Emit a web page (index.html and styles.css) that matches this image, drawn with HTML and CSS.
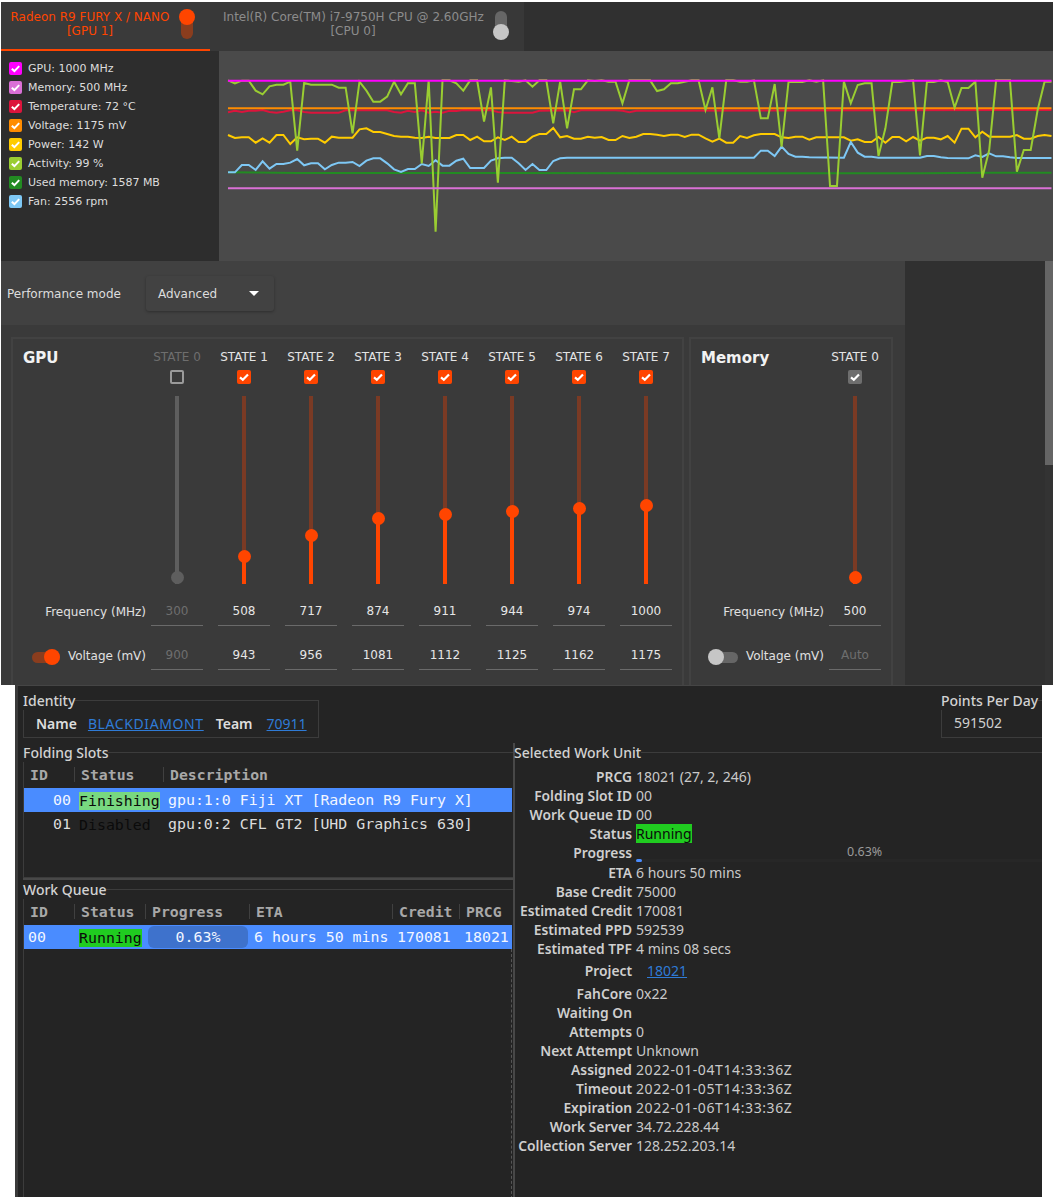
FILE: index.html
```html
<!DOCTYPE html>
<html lang="en">
<head>
<meta charset="utf-8">
<title>Radeon profile and FAHControl</title>
<link rel="stylesheet" href="styles.css">
</head>
<body>
<svg class="defs" width="0" height="0" aria-hidden="true"><symbol id="tick" viewBox="0 0 13 13"><path d="M2.8 6.8l2.6 2.3 4.8-5" fill="none" stroke="#fff" stroke-width="2"/></symbol></svg>

<section class="profile">
  <nav class="tabs">
    <div class="tab tab-active">
      <div class="tab-label">Radeon R9 FURY X / NANO<br>[GPU 1]</div>
      <span class="vtoggle vtoggle-on"><i></i></span>
    </div>
    <div class="tab tab-idle">
      <div class="tab-label">Intel(R) Core(TM) i7-9750H CPU @ 2.60GHz<br>[CPU 0]</div>
      <span class="vtoggle vtoggle-off"><i></i></span>
    </div>
  </nav>

  <div class="monitor">
    <ul class="legend">
      <li><span class="box c1"><svg><use href="#tick"/></svg></span>GPU: 1000 MHz</li>
      <li><span class="box c2"><svg><use href="#tick"/></svg></span>Memory: 500 MHz</li>
      <li><span class="box c3"><svg><use href="#tick"/></svg></span>Temperature: 72 °C</li>
      <li><span class="box c4"><svg><use href="#tick"/></svg></span>Voltage: 1175 mV</li>
      <li><span class="box c5"><svg><use href="#tick"/></svg></span>Power: 142 W</li>
      <li><span class="box c6"><svg><use href="#tick"/></svg></span>Activity: 99 %</li>
      <li><span class="box c7"><svg><use href="#tick"/></svg></span>Used memory: 1587 MB</li>
      <li><span class="box c8"><svg><use href="#tick"/></svg></span>Fan: 2556 rpm</li>
    </ul>
    <svg class="graph" viewBox="219 51 834 210">
      <g transform="translate(228 0) scale(6.92 0.33333)">
        <polyline class="line s3" points="0,337 1,332 2,336 3,332 4,332 5,330 6,336 7,338 8,335 9,331 10,331 11,336 12,338 16,338 17,331 23,331 24,336 25,338 26,332 27,336 28,331 29,338 30,335 31,338 32,332 33,333 34,330 38,331 39,336 40,338 44,338 45,332 49,331 50,337 51,331 55,331 56,331 57,332 58,337 59,332 119,330"/>
        <polyline class="line s4" points="0,325 119,325"/>
        <polyline class="line s5" points="0,405 1,414 2,412 3,412 4,428 5,415 6,428 7,405 8,405 9,432 10,412 11,418 12,416 13,416 14,428 15,410 16,413 17,413 18,413 19,388 20,385 21,396 22,396 23,402 24,408 25,410 26,410 27,413 28,414 29,410 30,414 31,414 32,414 33,405 34,405 35,420 36,410 37,424 38,424 39,412 40,420 41,410 42,426 43,426 44,410 45,402 46,402 47,384 48,412 49,408 50,416 51,416 52,410 53,413 54,411 55,420 56,420 57,408 58,414 59,410 60,402 61,402 62,404 63,408 64,404 65,404 66,411 67,404 68,404 69,415 70,425 71,416 72,428 73,428 74,408 75,414 76,406 77,402 78,402 79,402 80,412 81,414 82,410 83,410 84,419 85,412 86,412 87,412 88,412 89,412 90,422 91,418 92,426 93,426 94,411 95,428 96,411 97,411 98,424 99,411 100,422 101,413 102,413 103,418 104,408 105,428 106,386 107,386 108,412 109,395 110,410 111,410 112,410 113,410 114,405 115,416 116,416 117,408 118,405 119,408"/>
        <polyline class="line s7" points="0,517 10,519 30,519 60,520 100,520 110,518 119,518"/>
        <polyline class="line s8" points="0,517 1,517 2,495 3,495 4,510 5,484 6,506 7,492 8,492 9,488 10,477 11,496 12,490 13,490 14,508 15,495 16,488 17,488 18,486 19,498 20,482 21,475 22,475 23,490 24,508 25,516 26,507 27,507 28,492 29,498 30,481 31,497 32,497 33,482 34,476 35,504 36,504 37,504 38,482 39,475 40,473 41,473 42,490 43,510 44,492 45,510 46,510 47,483 48,475 49,473 76,473 77,452 78,452 79,468 80,440 81,462 82,470 83,470 84,472 89,473 90,426 91,458 92,470 93,470 94,473 100,473 101,468 102,468 103,472 104,474 107,475 108,466 109,471 110,460 111,469 112,469 113,472 114,474 119,474"/>
        <polyline class="line s6" points="0,241 1,250 2,242 3,242 4,272 5,283 6,259 7,254 8,254 9,245 10,452 11,249 12,254 13,254 14,254 15,254 16,263 17,263 18,400 19,245 20,272 21,305 22,305 23,290 24,245 25,283 26,250 27,250 28,490 29,240 30,695 31,241 32,241 33,250 34,272 35,241 36,241 37,365 38,262 39,548 40,241 41,243 42,245 43,241 44,260 45,241 46,241 47,370 48,245 49,385 50,268 51,268 52,241 53,243 54,241 55,245 56,245 57,310 58,241 59,241 60,241 61,241 62,273 63,268 64,250 65,250 66,245 67,241 68,241 69,330 70,262 71,415 72,241 73,241 74,245 75,245 76,241 77,355 78,355 79,252 80,440 81,246 82,246 83,246 84,241 85,245 86,241 87,558 88,558 89,245 90,310 91,255 92,250 93,250 94,468 95,385 96,246 97,246 98,243 99,241 100,466 101,246 102,246 103,241 104,246 105,323 106,264 107,264 108,245 109,533 110,450 111,241 112,241 113,241 114,515 115,450 116,450 117,330 118,245 119,245"/>
        <polyline class="line s2" points="0,565 119,565"/>
        <polyline class="line s1" points="0,242 119,242"/>
      </g>
    </svg>
  </div>

  <div class="lower-scroll">
    <div class="controls">
      <div class="perf">
        <span>Performance mode</span>
        <div class="select"><span>Advanced</span><i class="caret"></i></div>
      </div>
      <div class="frames">
        <div class="frame">
          <div class="grid">
            <h2 class="frame-title">GPU</h2>
            <div class="state-name off">STATE 0</div>
            <div class="state-name">STATE 1</div>
            <div class="state-name">STATE 2</div>
            <div class="state-name">STATE 3</div>
            <div class="state-name">STATE 4</div>
            <div class="state-name">STATE 5</div>
            <div class="state-name">STATE 6</div>
            <div class="state-name">STATE 7</div>

            <div></div>
            <div class="check-cell"><span class="cb cb-empty"></span></div>
            <div class="check-cell"><span class="cb cb-on"><svg><use href="#tick"/></svg></span></div>
            <div class="check-cell"><span class="cb cb-on"><svg><use href="#tick"/></svg></span></div>
            <div class="check-cell"><span class="cb cb-on"><svg><use href="#tick"/></svg></span></div>
            <div class="check-cell"><span class="cb cb-on"><svg><use href="#tick"/></svg></span></div>
            <div class="check-cell"><span class="cb cb-on"><svg><use href="#tick"/></svg></span></div>
            <div class="check-cell"><span class="cb cb-on"><svg><use href="#tick"/></svg></span></div>
            <div class="check-cell"><span class="cb cb-on"><svg><use href="#tick"/></svg></span></div>

            <div></div>
            <div class="slider slider-off" style="--v:7px"><b></b><i></i></div>
            <div class="slider" style="--v:28px"><b></b><i></i></div>
            <div class="slider" style="--v:49px"><b></b><i></i></div>
            <div class="slider" style="--v:66px"><b></b><i></i></div>
            <div class="slider" style="--v:70px"><b></b><i></i></div>
            <div class="slider" style="--v:73px"><b></b><i></i></div>
            <div class="slider" style="--v:76px"><b></b><i></i></div>
            <div class="slider" style="--v:79px"><b></b><i></i></div>

            <div class="row-label">Frequency (MHz)</div>
            <div class="value off">300</div>
            <div class="value">508</div>
            <div class="value">717</div>
            <div class="value">874</div>
            <div class="value">911</div>
            <div class="value">944</div>
            <div class="value">974</div>
            <div class="value">1000</div>

            <div class="row-label"><span class="htoggle htoggle-on"><i></i></span>Voltage (mV)</div>
            <div class="value off">900</div>
            <div class="value">943</div>
            <div class="value">956</div>
            <div class="value">1081</div>
            <div class="value">1112</div>
            <div class="value">1125</div>
            <div class="value">1162</div>
            <div class="value">1175</div>
          </div>
        </div>
        <div class="frame">
          <div class="grid grid-mem">
            <h2 class="frame-title">Memory</h2>
            <div class="state-name">STATE 0</div>
            <div></div>
            <div class="check-cell"><span class="cb cb-gray"><svg><use href="#tick"/></svg></span></div>
            <div></div>
            <div class="slider" style="--v:7px"><b></b><i></i></div>
            <div class="row-label">Frequency (MHz)</div>
            <div class="value">500</div>
            <div class="row-label"><span class="htoggle htoggle-off"><i></i></span>Voltage (mV)</div>
            <div class="value off">Auto</div>
          </div>
        </div>
      </div>
    </div>
    <div class="side"></div>
    <div class="scrollbar"><div class="thumb"></div></div>
  </div>
</section>

<section class="fah">
  <div class="top-row">
    <fieldset class="group identity">
      <legend>Identity</legend>
      <div class="identity-row">
        <strong>Name</strong><a class="spaced" href="#">BLACKDIAMONT</a><strong class="team">Team</strong><a href="#">70911</a>
      </div>
    </fieldset>
    <fieldset class="group ppd">
      <legend>Points Per Day</legend>
      <div class="ppd-value">591502</div>
    </fieldset>
  </div>

  <div class="panes">
    <div class="pane-left">
      <fieldset class="group slots">
        <legend>Folding Slots</legend>
        <div class="tr tr-head cols-slots"><span>ID</span><span>Status</span><span>Description</span></div>
        <div class="tr tr-sel cols-slots"><span class="id-r">00</span><span class="cell"><em class="chip chip-finish">Finishing</em></span><span class="cell">gpu:1:0 Fiji XT [Radeon R9 Fury X]</span></div>
        <div class="tr cols-slots"><span class="id-r">01</span><span class="cell"><em class="chip">Disabled</em></span><span class="cell">gpu:0:2 CFL GT2 [UHD Graphics 630]</span></div>
      </fieldset>
      <div class="hsplit"></div>
      <fieldset class="group queue">
        <legend>Work Queue</legend>
        <div class="tr tr-head cols-queue"><span>ID</span><span>Status</span><span>Progress</span><span>ETA</span><span>Credit</span><span>PRCG</span></div>
        <div class="tr tr-sel cols-queue"><span class="id-l">00</span><span class="cell"><em class="chip chip-run">Running</em></span><span class="bar-cell"><span class="qbar">0.63%</span></span><span class="cell">6 hours 50 mins</span><span class="cell">170081</span><span class="cell">18021</span></div>
        <div class="queue-rest"></div>
      </fieldset>
    </div>
    <div class="vsplit"></div>
    <fieldset class="group unit">
      <legend>Selected Work Unit</legend>
      <dl class="details">
        <dt>PRCG</dt><dd>18021 (27, 2, 246)</dd>
        <dt>Folding Slot ID</dt><dd>00</dd>
        <dt>Work Queue ID</dt><dd>00</dd>
        <dt>Status</dt><dd><span class="run-tag">Running</span></dd>
        <dt>Progress</dt><dd class="progress"><span class="pct">0.63%</span><span class="track"><span class="track-fill"></span></span></dd>
        <dt>ETA</dt><dd>6 hours 50 mins</dd>
        <dt>Base Credit</dt><dd>75000</dd>
        <dt>Estimated Credit</dt><dd>170081</dd>
        <dt>Estimated PPD</dt><dd>592539</dd>
        <dt>Estimated TPF</dt><dd>4 mins 08 secs</dd>
        <dt class="project">Project</dt><dd class="project"><a href="#">18021</a></dd>
        <dt>FahCore</dt><dd>0x22</dd>
        <dt>Waiting On</dt><dd></dd>
        <dt>Attempts</dt><dd>0</dd>
        <dt>Next Attempt</dt><dd>Unknown</dd>
        <dt>Assigned</dt><dd class="spaced">2022-01-04T14:33:36Z</dd>
        <dt>Timeout</dt><dd class="spaced">2022-01-05T14:33:36Z</dd>
        <dt>Expiration</dt><dd class="spaced">2022-01-06T14:33:36Z</dd>
        <dt>Work Server</dt><dd>34.72.228.44</dd>
        <dt>Collection Server</dt><dd>128.252.203.14</dd>
      </dl>
    </fieldset>
  </div>
</section>
</body>
</html>
```
FILE: styles.css
```css
* { box-sizing: border-box; }
html, body { margin: 0; padding: 0; background: #fff; }
body { width: 1053px; height: 1197px; overflow: hidden; }
.defs { position: absolute; }

/* ---------- radeon-profile window ---------- */
.profile {
  margin: 2px 0 0 1px;
  width: 1052px;
  height: 683px;
  overflow: hidden;
  background: #303030;
  font: 12px/16px "DejaVu Sans", sans-serif;
  color: #ddd;
}
.tabs { display: flex; height: 49px; background: #303030; }
.tab { display: flex; align-items: flex-start; padding-top: 8px; height: 49px; }
.tab-label { text-align: center; line-height: 14px; white-space: nowrap; }
.tab-active {
  width: 209px; padding-left: 9px; gap: 11px;
  background: #3a3a3a; color: #ff4500; border-bottom: 2px solid #ff4500;
}
.tab-active .tab-label { width: 160px; }
.tab-idle {
  width: 314px; padding-left: 13px; gap: 12px;
  background: #383838; color: #8c8c8c;
}
.tab-idle .tab-label { width: 260px; }
.vtoggle { position: relative; display: block; width: 12px; height: 28px; margin-top: 1px; border-radius: 6px; }
.vtoggle i { position: absolute; left: -2px; width: 16px; height: 16px; border-radius: 50%; }
.vtoggle-on { background: #8a3d1e; }
.vtoggle-on i { top: -2px; background: #ff4500; }
.vtoggle-off { background: #666; }
.vtoggle-off i { bottom: -1px; background: #c6c6c6; }

.monitor { display: flex; height: 210px; }
.legend { width: 218px; margin: 0; padding: 8px 0 0 8px; list-style: none; background: #2d2d2d; font-size: 11px; }
.legend li { display: flex; align-items: center; gap: 6px; height: 19px; white-space: nowrap; }
.box { width: 13px; height: 13px; border-radius: 2px; flex: none; }
.box svg { display: block; width: 13px; height: 13px; }
.c1 { background: #f0f; }
.c2 { background: #da70d6; }
.c3 { background: #dc143c; }
.c4 { background: #ff8c00; }
.c5 { background: #fc0; }
.c6 { background: #9acd32; }
.c7 { background: #228b22; }
.c8 { background: #7ec8f5; }
.graph { flex: 1; display: block; height: 210px; background: #4a4a4a; }
.line { fill: none; stroke-width: 2; vector-effect: non-scaling-stroke; }
.s1 { stroke: #f0f; }
.s2 { stroke: #da70d6; }
.s3 { stroke: #dc143c; }
.s4 { stroke: #ff8c00; }
.s5 { stroke: #fc0; }
.s6 { stroke: #9acd32; }
.s7 { stroke: #228b22; }
.s8 { stroke: #7ec8f5; }

.lower-scroll { display: flex; height: 424px; }
.controls { width: 904px; background: #3a3a3a; }
.side { width: 140px; background: #303030; }
.scrollbar { width: 8px; background: #333; }
.thumb { height: 204px; background: #656565; }

.perf {
  display: flex; align-items: center; height: 64px; padding: 1px 0 0 6px; gap: 25px;
  background: #414141; white-space: nowrap;
}
.select {
  display: flex; align-items: center; justify-content: space-between;
  width: 128px; height: 35px; padding: 0 15px 0 12px;
  background: #424242; border-radius: 3px; box-shadow: 0 1px 3px rgba(0,0,0,.3);
}
.caret { width: 0; height: 0; border: 5px solid transparent; border-top: 5px solid #fff; border-bottom: 0; }

.frames { display: flex; gap: 5px; padding: 12px 0 0 10px; }
.frame { height: 360px; border: 2px solid #424242; }
.grid {
  display: grid;
  grid-template-columns: 130px repeat(8, 66px);
  grid-template-rows: 21px 26px 188px 42px 44px;
  column-gap: 1px;
  width: 669px;
  padding: 10px 0 0;
  box-sizing: content-box;
  height: 321px;
}
.grid-mem { grid-template-columns: 130px 66px; width: 200px; }
.frame-title { margin: 0; padding-left: 10px; font: 700 15px/18px "DejaVu Sans", sans-serif; color: #f2f2f2; }
.state-name { text-align: center; line-height: 16px; white-space: nowrap; color: #e4e4e4; }
.off { color: #6e6e6e; }
.check-cell { display: flex; justify-content: center; }
.cb { display: block; width: 14px; height: 14px; border-radius: 2px; }
.cb svg { display: block; width: 14px; height: 14px; }
.cb-on { background: #ff4500; }
.cb-gray { background: #6e6e6e; }
.cb-empty { border: 2px solid #9a9a9a; }

.slider { position: relative; width: 4px; height: 188px; justify-self: center; background: #7a3a24; }
.slider b { position: absolute; left: 0; bottom: 0; width: 4px; height: var(--v); background: #ff4500; }
.slider i {
  position: absolute; left: -4.5px; bottom: calc(var(--v) - 6.5px);
  width: 13px; height: 13px; border-radius: 50%; background: #ff4500;
}
.slider-off { background: #5e5e5e; }
.slider-off b, .slider-off i { background: #5e5e5e; }

.row-label {
  display: flex; align-items: center; justify-content: flex-end; gap: 8px;
  align-self: end; height: 24px; margin: 0 -3px 2px 0; white-space: nowrap; color: #e0e0e0;
}
.value {
  align-self: end; justify-self: center; width: 52px; height: 26px;
  text-align: center; line-height: 22px; border-bottom: 1px solid #6a6a6a;
}
.value:not(.off) { color: #e6e6e6; }
.htoggle { position: relative; display: block; width: 28px; height: 11px; margin-top: 2px; border-radius: 6px; }
.htoggle i { position: absolute; top: -3px; width: 16px; height: 16px; border-radius: 50%; }
.htoggle-on { background: #8a3d1e; }
.htoggle-on i { right: 0; background: #ff4500; }
.htoggle-off { background: #666; }
.htoggle-off i { left: -2px; background: #c6c6c6; }

/* ---------- FAHControl window ---------- */
.fah {
  margin-left: 15px;
  width: 1027px;
  height: 512px;
  overflow: hidden;
  padding: 5px 0 0 5px;
  background: #242424;
  border-left: 3px solid #3a3a3a;
  border-top: 1px solid #454545;
  font: 14px/19px "Noto Sans", sans-serif;
  color: #d0d0d0;
}
.fah a { color: #2f7bd6; }
.spaced { letter-spacing: .6px; }
.group { margin: 0; padding: 0; min-width: 0; border: 1px solid #3c3c3c; border-right: 0; }
.group legend { margin-left: -1px; padding: 0; line-height: 19px; font-weight: 500; color: #d2d2d2; white-space: nowrap; }
.top-row { display: flex; justify-content: space-between; height: 52px; }
.identity { width: 296px; height: 47px; border-right: 1px solid #3c3c3c; }
.identity-row { display: flex; height: 26px; align-items: center; padding-left: 12px; white-space: nowrap; }
.identity-row strong { font-weight: 600; color: #ddd; margin-right: 11px; }
.identity-row .team { margin: 0 14px 0 12px; }
.ppd { width: 101px; height: 47px; }
.ppd-value { height: 26px; line-height: 26px; padding-left: 12px; }

.panes { display: flex; height: 454px; }
.pane-left { width: 490px; }
.slots { height: 135px; border-top-width: 1px; }
.hsplit { height: 2px; background: #484848; }
.queue { height: 320px; border-bottom: 0; }
.vsplit { width: 2px; margin-top: 0; background: #484848; flex: none; }
.unit { flex: 1; min-width: 0; margin-left: -1px; border-left: 0; border-bottom: 0; border-right: 0; }
.unit legend { margin-left: 0; }

.tr {
  display: grid; align-items: center; height: 24px; width: 488px;
  font: 14.9px/24px "DejaVu Sans Mono", monospace; color: #dcdcdc; white-space: nowrap;
}
.tr-head { height: 26px; padding-bottom: 2px; font-weight: 700; font-size: 14.8px; color: #a8a8a8; }
.tr-head span { padding-left: 6px; line-height: 15px; }
.tr-head span + span { border-left: 1px solid #404040; }
.cols-slots { grid-template-columns: 50px 89px 1fr; }
.cols-queue { grid-template-columns: 50px 71px 104px 143px 67px 1fr; }
.tr-sel { background: #4a8cff; color: #f2f6ff; }
.id-r { text-align: right; padding-right: 3px; }
.id-l { padding-left: 4px; }
.cell { padding-left: 5px; }
.chip { display: inline-block; height: 18px; line-height: 18px; font-style: normal; color: #0b0b0b; vertical-align: middle; }
.chip-finish { background: #78d880; }
.chip-run { background: #20cc20; }
.bar-cell { display: flex; padding-left: 3px; }
.qbar { width: 100px; height: 22px; line-height: 22px; text-align: center; background: #3e72cc; border-radius: 6px; }
.queue-rest { height: 250px; width: 488px; border-right: 1px dashed #555; }

.details {
  display: grid; grid-template-columns: 118px 1fr;
  grid-template-rows: repeat(4, 19px) 20px repeat(5, 19px) 26px repeat(9, 19px);
  column-gap: 4px; margin: 5px 0 0; line-height: 19px;
}
.details dt { text-align: right; font-weight: 600; font-size: 13.8px; color: #cfcfcf; white-space: nowrap; }
.details dd { margin: 0; color: #cacaca; white-space: nowrap; }
.run-tag { display: inline-block; height: 19px; background: #20cc20; color: #0b0b0b; }
.details .project { line-height: 26px; }
.details dd.project { padding-left: 11px; }
.progress { position: relative; }
.pct { display: block; padding-left: 211px; font-size: 12.5px; line-height: 17px; color: #9a9a9a; }
.track { display: block; height: 3px; margin-top: -1px; background: #272727; }
.track-fill { display: block; width: 6px; height: 3px; background: #4a8cff; border-radius: 2px; }
```
